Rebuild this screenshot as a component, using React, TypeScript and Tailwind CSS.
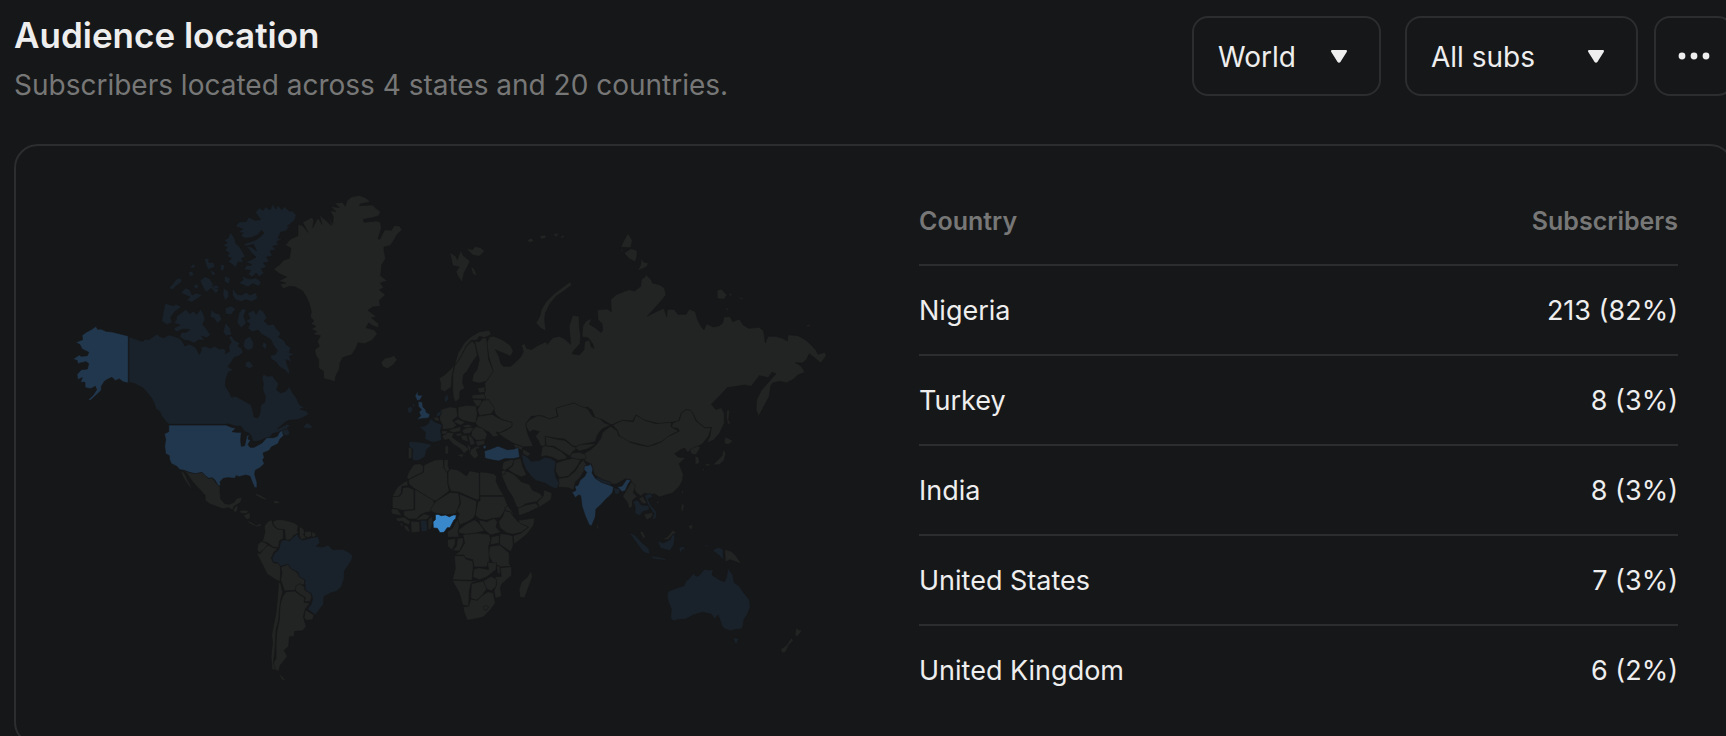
import type { ReactNode } from 'react';

type Tone = 'none' | 'low' | 'mid' | 'high';

type Region = {
  name: string;
  origin: string;
  shapes: Partial<Record<Tone, string[]>>;
};

type Row = {
  country: string;
  subscribers: number;
  share: number;
};

const rows: Row[] = [
  {country: 'Nigeria', subscribers: 213, share: 82},
  {country: 'Turkey', subscribers: 8, share: 3},
  {country: 'India', subscribers: 8, share: 3},
  {country: 'United States', subscribers: 7, share: 3},
  {country: 'United Kingdom', subscribers: 6, share: 2}
];

export default function App() {
  return (
    <div className="h-screen overflow-hidden bg-[#161718] font-[Inter,'Liberation_Sans',sans-serif] text-[#eeeeee]">
      <main className="-mr-2 pl-3.5 pt-4">
        <header className="flex items-start justify-between">
          <div>
            <h1 className="text-[35px] leading-[38px] font-semibold">Audience location</h1>
            <p className="mt-3 text-[28px] leading-[38px] text-[#777777]">
              Subscribers located across 4 states and 20 countries.
            </p>
          </div>
          <div className="flex">
            <Dropdown label="Region" className="mr-6 w-[189px]">
              <option>World</option>
              <option>United States</option>
            </Dropdown>
            <Dropdown label="Subscriber type" className="mr-4 w-[233px]">
              <option>All subs</option>
              <option>Paid subs</option>
            </Dropdown>
            <button
              type="button"
              aria-label="More options"
              className="flex size-20 items-center justify-center rounded-2xl border-2 border-[#2c2d2f]"
            >
              <svg width="32" height="8" viewBox="0 0 32 8" fill="currentColor">
                <circle cx="4" cy="4" r="3.4" />
                <circle cx="16" cy="4" r="3.4" />
                <circle cx="28" cy="4" r="3.4" />
              </svg>
            </button>
          </div>
        </header>

        <section className="mt-10 grid grid-cols-2 items-center gap-[90px] rounded-3xl border-2 border-[#2c2d2f] px-[54px] py-[29px]">
          <WorldMap />
          <SubscriberTable />
        </section>
      </main>
    </div>
  );
}

function Dropdown({label, className, children}: {label: string; className: string; children: ReactNode}) {
  return (
    <label className={`relative block ${className}`}>
      <select
        aria-label={label}
        className="h-20 w-full appearance-none rounded-2xl border-2 border-[#2c2d2f] bg-[#161718] pt-0.5 pr-14 pl-6 text-[28px]"
      >
        {children}
      </select>
      <svg
        className="pointer-events-none absolute top-[34px] right-[34px]"
        width="16"
        height="13"
        viewBox="0 0 16 13"
        fill="currentColor"
      >
        <path d="M1.2 0h13.6c1 0 1.5 1.1.9 1.9L9.4 12c-.7 1.1-2.1 1.1-2.8 0L.3 1.9C-.3 1.1.2 0 1.2 0z" />
      </svg>
    </label>
  );
}

function SubscriberTable() {
  return (
    <table className="w-full">
      <thead>
        <tr className="h-[90px] border-b-2 border-[#2c2d2f] text-[25px] text-[#777777]">
          <th scope="col" className="pt-1 text-left font-semibold">Country</th>
          <th scope="col" className="pt-1 text-right font-semibold">Subscribers</th>
        </tr>
      </thead>
      <tbody>
        {rows.map((row) => (
          <tr key={row.country} className="h-[90px] border-b-2 border-[#2c2d2f] text-[27px] last:border-b-0">
            <td className="pt-0.5">{row.country}</td>
            <td className="pt-0.5 text-right">{`${row.subscribers} (${row.share}%)`}</td>
          </tr>
        ))}
      </tbody>
    </table>
  );
}

function WorldMap() {
  return (
    <svg
      className="w-full stroke-[#161718]"
      viewBox="212 556 2277 1560"
      role="img"
      aria-label="Subscribers by country"
      strokeWidth="2"
      strokeLinejoin="round"
    >
      {regions.map((region) => (
        <g key={region.name} transform={`translate(${region.origin})`}>
          {(Object.keys(region.shapes) as Tone[]).map((tone) => (
            <g key={tone} className={toneFill[tone]}>
              {region.shapes[tone]?.map((points) => <polygon key={points} points={points} />)}
            </g>
          ))}
        </g>
      ))}
    </svg>
  );
}

const toneFill: Record<Tone, string> = {
  none: 'fill-[#222423]',
  low: 'fill-[#19222a]',
  mid: 'fill-[#20374d]',
  high: 'fill-[#3988cb]'
};

// Country outlines, grouped by region. Points are relative to the region's origin.
const regions: Region[] = [
  {
    name: 'Canada and Alaska',
    origin: '180 540',
    shapes: {
      low: [
        '209,471 222,476 238,482 250,485 258,478 268,480 280,472 294,462 300,470 312,474 330,466 345,470 360,476 370,486 376,498 390,494 404,500 412,508 420,524 426,512 424,502 440,500 452,506 466,500 480,508 494,506 500,514 498,522 510,515 508,500 516,488 508,474 516,468 526,482 542,490 536,500 546,506 552,518 540,528 524,534 516,548 506,560 512,566 524,570 508,578 500,596 498,618 510,638 516,652 530,650 548,660 566,670 576,676 580,690 584,712 596,714 602,700 604,676 616,668 618,650 610,630 612,612 608,596 612,584 626,590 640,588 648,600 658,612 652,630 664,640 680,634 690,620 700,640 712,656 720,674 735,685 722,688 742,694 748,704 730,714 715,720 690,722 680,726 668,736 654,748 666,742 682,734 694,736 684,744 690,764 680,768 668,754 656,758 640,762 632,772 620,775 600,784 582,786 575,768 568,760 556,756 545,740 530,740 505,732 500,734 328,734 320,726 306,708 302,696 290,688 285,672 276,654 264,640 250,624 238,618 226,612 209,608',
        '528,140 540,126 560,126 568,112 588,122 604,120 588,98 600,84 612,92 618,81 632,90 640,74 650,88 655,76 668,90 674,80 690,94 700,94 711,106 706,122 684,140 692,138 680,154 664,158 656,176 670,178 652,186 658,196 640,200 650,210 632,214 640,228 622,232 630,246 612,250 622,262 606,268 614,280 600,292 590,280 578,292 566,284 574,272 554,270 560,258 578,256 560,246 576,240 590,232 578,222 568,208 560,200 576,202 592,214 582,194 560,200 552,192 570,188 590,180 604,170 614,160 606,152 596,166 576,174 556,176 544,168 552,160 536,158 550,148',
        '513,158 526,176 530,192 540,200 550,216 558,232 546,236 554,248 536,248 530,264 518,254 506,246 516,236 502,230 510,220 496,212 504,204 490,196 504,190 494,180 506,176',
        '538,310 552,300 546,288 560,294 572,298 590,294 606,308 598,320 580,312 566,322 552,316',
        '519,326 534,344 548,346 560,338 572,346 590,338 595,356 578,366 560,360 545,366 528,360 519,346',
        '364,294 350,299 342,310 328,326 340,330 352,318 368,306',
        '364,340 378,325 392,330 398,346 412,340 430,346 412,358 398,368 382,362 392,352',
        '400,253 409,256 405,265 390,266',
        '387,277 400,275 403,286 392,292',
        '434,235 450,237 448,247 464,249 467,263 452,267 458,278 443,265',
        '484,253 497,257 492,275 483,271',
        '422,302 438,291 452,297 464,318 479,330 470,343 456,326 440,338 428,318',
        '458,318 474,316 480,324 468,328',
        '452,272 466,276 468,288 458,286',
        '497,287 513,297 509,314 495,305',
        '492,325 507,334 509,350 498,363 491,346',
        '408,312 420,318 412,328 402,322',
        '317,371 342,378 350,373 367,382 346,396 334,414 339,429 322,435 307,424 311,400',
        '352,410 368,398 380,389 392,402 402,394 412,404 424,388 433,404 437,420 430,434 442,448 454,466 442,474 426,470 437,482 418,481 404,491 390,484 376,482 361,471 366,458 380,458 392,450 372,448 350,457 343,446 362,436 343,430 351,420',
        '455,389 466,399 481,403 487,420 474,431 463,415 453,412',
        '497,385 516,379 529,388 516,405 499,403',
        '499,429 512,445 517,465 500,469 491,456',
        '539,400 548,387 561,389 553,410 561,430 546,445 533,430',
        '565,400 584,391 590,404 600,388 612,395 623,414 614,424 628,436 643,433 651,447 665,461 658,472 675,483 681,495 695,505 690,518 705,524 690,530 697,547 680,540 684,556 691,574 690,585 676,571 660,561 650,547 635,538 633,527 648,524 654,512 643,498 635,481 620,471 606,463 596,451 580,457 565,446 572,432 559,424 572,416',
        '555,480 572,469 583,490 581,506 566,513 551,500',
        '559,548 570,543 583,560 570,567 557,560',
        '611,487 623,492 619,511 609,500'
      ],
      mid: [
        '110,440 115,449 125,448 140,455 160,457 180,462 207,469 207,610 192,607 180,598 168,603 158,593 148,597 136,604 126,620 126,632 112,645 94,662 86,660 100,648 112,630 108,620 95,627 77,624 77,608 63,608 69,594 55,600 53,584 66,570 84,568 88,552 80,546 54,552 54,543 41,538 60,526 65,530 84,528 88,518 68,508 62,495 49,488 70,480 68,467 82,457 97,449'
      ]
    }
  },
  {
    name: 'Americas',
    origin: '180 1200',
    shapes: {
      none: [
        '366,211 388,217 408,221 428,217 448,237 458,233 470,250 482,258 482,276 484,298 496,312 510,314 524,308 532,296 549,293 544,308 534,314 524,320 520,332 508,324 490,327 470,320 450,312 437,302 438,288 426,274 412,260 400,246 388,230 384,222',
        '364,213 374,218 384,238 396,262 399,271 388,258 376,240 370,230',
        '522,330 530,318 536,320 534,334 526,339',
        '538,334 556,331 570,335 560,342 546,341',
        '551,348 572,338 572,356 564,360',
        '560,360 574,366 590,377 604,371 607,378 592,382 574,374',
        '588,281 604,287 622,297 620,302 602,294 588,287',
        '640,303 656,303 662,311 646,312',
        '638,360 626,365 615,380 617,398 611,420 606,424 626,430 640,442 658,444 660,424 672,416 672,390 654,388 644,380 640,372',
        '640,366 652,360 668,360 690,365 704,369 717,378 714,392 718,400 702,408 698,416 684,424 678,416 676,390 656,388 644,378',
        '720,380 732,387 737,398 732,404 740,416 726,420 720,408',
        '736,396 756,394 757,410 744,414 736,408',
        '758,395 771,404 765,413 757,411',
        '606,425 626,433 618,446 608,454 600,460 593,450 596,434',
        '591,460 602,462 612,450 626,436 642,444 656,446 644,458 636,476 644,490 658,490 664,502 664,520 662,546 646,538 624,524 612,500 600,476',
        '664,502 686,494 694,506 714,518 720,530 736,540 736,556 718,554 708,572 676,574 668,552 664,540 668,520',
        '708,572 710,558 722,552 734,560 738,572 750,578 758,590 752,606 734,606 738,594 722,584',
        '738,630 764,646 760,660 742,662 734,654',
        '680,576 706,574 722,586 736,594 734,608 752,610 738,628 732,650 736,666 741,680 730,693 706,695 704,711 690,711 688,740 674,752 684,770 670,788 662,798 658,815 646,811 640,794 650,776 650,740 652,700 660,660 662,616 670,590',
        '658,546 664,552 670,578 664,600 660,630 658,660 650,690 648,730 646,760 642,790 650,812 638,808 635,770 640,730 637,706 643,676 650,640 654,600',
        '656,818 668,830 681,843 668,841'
      ],
      low: [
        '666,422 680,420 690,424 702,412 714,402 720,416 730,421 754,415 768,412 776,410 782,430 770,440 790,442 806,436 820,450 850,449 868,457 880,468 877,482 866,498 855,514 855,536 847,560 832,575 812,581 794,591 793,613 780,630 768,646 744,628 756,612 760,598 756,582 738,572 736,540 720,532 716,518 696,508 686,494 664,500 656,490 640,486 638,474 646,460 658,450',
        '732,80 744,69 756,77 761,84 746,87 734,85',
        '664,98 672,90 688,88 692,104 680,109 672,104'
      ],
      mid: [
        '328,76 500,76 514,82 530,86 518,96 532,98 546,98 544,120 546,140 556,138 562,110 570,104 566,118 574,122 566,134 572,143 584,143 608,130 622,114 642,114 654,110 660,98 668,92 673,108 662,118 656,132 636,142 630,152 611,160 615,174 610,180 615,192 602,204 588,212 586,224 593,248 593,264 586,264 578,246 572,230 560,226 540,231 530,228 528,236 505,234 492,236 482,246 484,259 476,257 466,240 458,234 448,236 438,228 428,218 408,222 390,218 374,212 362,210 352,200 336,192 330,178 330,168 319,162 316,140 319,120 315,102 328,96'
      ]
    }
  },
  {
    name: 'North Atlantic',
    origin: '780 540',
    shapes: {
      none: [
        '262,64 276,52 300,47 318,54 334,66 302,73 300,78 340,76 350,86 364,96 358,108 340,114 312,119 314,128 350,124 364,128 366,146 356,178 362,178 376,150 396,152 404,138 420,138 428,150 412,166 404,182 392,198 374,202 374,214 379,236 367,256 364,288 384,304 362,310 374,324 360,330 378,346 360,362 363,380 340,382 326,392 342,404 352,412 336,414 358,432 358,444 340,438 328,430 320,444 344,450 354,462 338,482 316,492 296,489 290,506 276,526 262,530 250,534 242,550 240,568 229,590 227,606 208,600 193,597 192,574 178,566 178,540 169,526 166,510 180,500 174,486 183,468 160,464 172,456 156,448 170,440 154,432 164,424 153,412 156,396 150,372 140,350 130,334 108,322 90,320 72,327 62,314 80,310 58,304 82,292 60,282 43,268 60,256 72,242 90,236 95,206 78,196 94,178 116,168 116,134 130,138 146,158 130,128 158,113 164,122 160,144 176,114 188,134 180,106 200,122 216,138 204,104 220,134 222,112 212,92 230,96 214,80 240,84 226,70 250,68 258,80',
        '365,548 378,535 392,533 404,527 413,540 402,555 384,567 369,560',
        '571,218 590,230 594,240 604,212 612,228 632,244 624,262 614,280 608,308 596,290 590,276 600,262 580,258',
        '620,206 640,210 646,200 664,204 676,214 660,230 640,226',
        '634,258 646,270 654,290 640,282'
      ]
    }
  },
  {
    name: 'Northern Asia',
    origin: '1680 660',
    shapes: {
      none: [
        '-210,352 -196,350 -170,361 -148,376 -138,394 -146,410 -160,404 -184,394 -192,390 -180,412 -176,430 -168,440 -146,440 -128,424 -116,412 -108,396 -114,376 -104,372 -98,386 -84,390 -66,378 -40,366 -36,374 -20,354 0,350 16,358 34,374 32,350 29,320 40,287 59,290 60,320 64,350 62,372 44,392 38,402 60,406 74,390 76,366 90,360 96,382 104,386 100,372 86,354 68,352 70,320 80,304 98,296 90,314 110,326 124,338 130,334 128,312 116,300 114,270 144,268 156,276 154,240 170,225 196,215 210,210 226,214 244,200 246,180 262,167 276,180 280,190 300,195 315,204 320,226 300,250 264,290 290,276 314,266 322,292 324,269 344,269 356,284 380,284 390,268 408,276 415,300 426,322 434,330 442,312 462,322 480,318 490,310 494,291 512,291 520,306 540,298 552,316 568,326 600,323 613,334 618,370 626,350 650,350 670,356 684,364 686,345 716,348 738,360 756,376 770,392 776,404 796,398 801,408 784,430 770,418 750,402 742,418 730,430 708,429 726,440 737,458 716,466 700,480 682,489 660,485 640,490 634,500 630,530 614,560 598,590 590,570 592,540 606,512 620,496 636,478 650,462 638,458 626,474 600,468 576,500 556,496 530,500 504,504 480,530 456,554 470,570 486,564 495,580 495,610 480,642 462,662 442,670 452,650 456,624 436,624 412,604 402,584 394,572 380,570 366,580 358,604 336,608 300,612 256,602 230,586 220,604 190,602 156,616 130,600 108,596 98,572 84,562 70,568 60,560 44,550 20,558 -10,566 -6,590 -30,598 -52,588 -84,590 -100,610 -98,630 -92,650 -84,666 -78,680 -108,682 -140,670 -166,654 -184,640 -164,634 -144,622 -144,608 -172,600 -192,584 -198,566 -212,542 -230,540 -222,510 -224,490 -216,480 -200,452 -212,410 -218,370',
        '33,186 37,196 14,214 -10,230 -28,252 -42,280 -44,300 -40,334 -56,326 -70,310 -58,288 -54,270 -40,246 -16,222 6,206',
        '206,41 219,62 214,84 184,82 194,62',
        '194,100 214,87 233,92 233,108 228,127 208,116',
        '246,116 254,128 267,130 262,142 234,153 244,136',
        '180,88 192,90 190,97',
        '473,212 486,209 503,226 494,239 474,237',
        '507,218 517,222 515,234',
        '528,228 554,236 548,240',
        '494,262 508,268 504,274',
        '736,320 748,314 756,322',
        '-98,62 -84,55 -76,64 -88,69',
        '-60,50 -44,45 -38,54 -54,59',
        '-20,44 -2,39 -8,53',
        '0,55 14,44 14,55',
        '503,570 511,572 508,600 515,613 505,613 501,590',
        '154,620 174,634 178,648 206,658 212,668 240,676 264,680 290,674 310,664 314,654 336,646 360,634 356,626 336,624 340,610 360,602 366,580 380,570 394,572 402,584 410,604 436,624 456,624 448,648 436,664 430,672 412,682 398,692 384,698 376,685 364,690 346,702 356,712 379,714 359,732 372,764 369,784 360,800 340,820 316,827 300,832 286,822 270,826 256,820 244,830 230,818 220,800 214,780 198,778 170,794 150,792 120,776 104,764 100,748 96,734 76,724 72,702 94,690 110,676 124,656 130,638 142,628',
        '160,616 190,602 222,606 230,586 256,602 290,612 336,608 336,622 358,634 330,648 306,666 266,680 210,666 180,648 174,632'
      ]
    }
  },
  {
    name: 'Europe and Central Asia',
    origin: '1140 930',
    shapes: {
      none: [
        '87,411 98,415 98,446 87,448',
        '161,323 176,321 181,335 168,333',
        '182,300 204,294 212,291 232,295 235,320 220,332 232,346 222,356 190,360 188,344 181,330',
        '236,292 262,287 290,289 294,310 290,340 270,337 250,332 236,322',
        '179,206 196,196 212,180 226,164 236,130 256,98 274,82 300,66 330,62 336,74 316,84 300,80 292,92 276,92 262,108 240,150 224,170 218,200 216,232 196,246 183,240 184,220',
        '220,240 220,196 226,168 240,150 262,108 278,94 288,104 294,138 284,150 274,166 264,184 252,196 250,220 256,236 242,244 241,266 228,278 222,262',
        '286,94 300,96 310,84 322,86 324,110 328,150 342,184 322,214 300,221 278,215 282,194 293,180 300,150 292,120',
        '294,236 316,231 317,248 300,250',
        '278,256 314,252 320,268 296,268 278,267',
        '279,270 306,270 310,287 292,291',
        '310,272 328,270 346,296 336,312 300,318 294,300',
        '296,320 338,314 352,322 368,330 398,338 398,350 376,362 362,369 350,367 358,379 342,382 330,368 314,360 296,350 288,340',
        '278,362 290,350 310,356 324,374 318,390 290,392 275,377',
        '288,394 317,391 316,404 294,410',
        '221,336 236,328 258,338 244,347',
        '206,362 224,356 245,350 243,365 222,369',
        '248,362 266,352 284,354 272,371 254,373',
        '246,348 268,344 282,350 260,355',
        '228,372 246,370 248,378 234,380',
        '244,378 262,376 268,398 248,390',
        '266,374 280,384 288,404 272,407',
        '268,424 290,410 306,411 290,420 298,438 286,448 275,437',
        '264,402 274,412 273,427 265,418',
        '188,380 204,368 224,370 218,382 234,394 258,408 268,419 254,432 244,418 222,404 208,388 196,392',
        '230,435 253,432 250,444',
        '197,408 207,408 207,433 197,433',
        '186,363 206,363 200,374 188,374',
        '402,402 432,412 428,422 408,416',
        '430,417 454,431 446,441 430,432',
        '440,340 454,328 474,318 490,320 510,328 536,320 530,296 556,288 584,280 604,290 624,296 640,320 662,328 676,340 694,346 668,358 654,376 648,396 610,404 594,412 580,408 556,388 530,386 498,380 498,410 484,409 477,392 468,380 480,366 462,361 450,368 441,352',
        '488,412 498,408 520,412 544,424 562,440 560,448 536,452 522,444 500,438 484,442',
        '498,380 530,388 556,392 580,410 596,414 580,426 572,440 546,424 524,410 500,408',
        '594,408 610,404 652,402 624,418 600,424 588,416',
        '578,430 600,428 618,434 620,448 590,450 572,442',
        '530,460 560,450 580,446 604,450 596,466 586,480 566,500 540,504 528,484',
        '538,506 566,502 588,484 600,464 612,450 622,466 614,484 602,504 588,518 583,542 566,534 536,532'
      ],
      low: [
        '84,296 96,289 101,300 95,311 85,309',
        '118,350 134,350 146,342 154,326 166,336 189,346 184,360 187,392 170,397 158,398 136,388 138,368',
        '89,395 120,397 150,403 158,406 142,420 137,441 120,452 104,454 98,446 100,418 89,411',
        '171,312 185,301 185,316 171,323',
        '195,264 206,253 207,270 198,281',
        '426,434 438,438 448,446 456,455 480,452 496,442 514,446 530,456 526,484 530,504 540,520 532,538 514,531 496,520 470,513 456,500 440,480 432,462'
      ],
      mid: [
        '107,258 116,243 116,256 130,257 122,271 113,273',
        '116,275 129,277 131,292 139,300 141,308 152,314 148,325 126,327 112,330 124,318 119,308 126,300 117,290',
        '99,284 105,284 104,292',
        '315,424 334,418 356,409 384,420 404,418 417,413 421,443 402,447 376,447 358,454 340,451 317,446',
        '311,409 321,407 319,417 312,417'
      ]
    }
  },
  {
    name: 'Africa and Middle East',
    origin: '1140 1320',
    shapes: {
      none: [
        '82,112 90,94 104,74 122,72 133,80 131,98 108,108 88,120',
        '39,170 54,142 68,132 84,122 86,138 68,140 66,160 56,172',
        '88,120 132,98 134,76 166,61 192,59 194,84 204,98 206,134 210,154 170,184 160,182 104,146 88,132',
        '194,61 207,59 206,78 211,90 202,98 194,84',
        '206,98 214,87 236,91 262,109 270,93 300,99 300,178 292,181 240,158 214,154 206,132',
        '301,97 320,98 346,103 352,112 350,124 360,146 374,168 301,168',
        '39,172 60,170 68,160 70,144 86,142 104,150 104,210 68,212 54,208 39,206',
        '106,148 162,182 168,200 156,216 140,218 122,226 112,238 90,238 74,228 72,214 106,210',
        '168,186 212,158 238,160 242,190 230,222 200,226 176,222 166,220 152,212',
        '240,162 292,184 290,220 282,236 262,248 240,256 234,236 240,222 232,214 244,192',
        '302,170 374,170 386,200 374,216 362,234 340,236 320,242 300,238 288,226 296,184 302,184',
        '298,240 322,246 344,236 354,246 350,262 364,278 334,286 316,272 302,252',
        '376,212 392,216 404,232 414,244 448,262 426,278 400,284 382,280 362,264 358,246 370,230',
        '376,204 386,198 408,230 392,216 380,214',
        '416,242 466,235 463,256 444,282 420,302 404,314 401,288 426,280 448,262 424,252',
        '362,282 384,284 400,288 402,318 394,336 360,314',
        '336,292 360,286 360,310 332,316',
        '332,320 362,316 390,340 390,372 396,380 364,382 340,370 326,344',
        '250,284 290,280 330,284 334,300 328,320 330,364 322,382 284,382 280,360 256,354 254,346 226,346 240,336 256,310',
        '238,270 262,252 286,240 302,254 316,274 290,280 260,284 238,280',
        '205,293 204,276 220,264 228,248 236,238 240,256 236,278 240,292',
        '204,300 228,296 228,312 218,332 205,320',
        '220,333 232,318 234,296 252,294 252,310 240,334',
        '225,348 254,348 260,358 280,364 282,380 278,422 219,420 228,388',
        '284,388 300,384 328,390 324,368 352,370 350,390 322,412 300,420 280,412',
        '352,378 362,380 362,404 354,400',
        '362,384 397,381 397,407 368,432 363,444 367,470 348,476 344,454 352,432 346,412 366,410',
        '312,424 336,410 352,420 350,440 336,454 318,446',
        '276,432 312,424 322,448 308,468 292,482 274,476',
        '219,422 278,424 308,422 276,430 270,452 268,500 250,496 240,460',
        '251,502 268,500 274,478 294,482 308,468 326,456 342,460 348,490 332,512 312,532 290,537 264,542 256,522',
        '312,502 320,497 328,502 322,511 315,511',
        '456,392 459,412 448,442 436,474 422,473 419,450 426,428 444,412',
        '37,207 54,208 68,228 40,224 35,216',
        '48,236 74,232 92,244 90,256 76,250 68,244 56,247',
        '58,248 72,254 68,262',
        '72,256 84,258 95,280 78,270',
        '94,244 121,246 122,277 96,279',
        '108,242 134,222 154,228 142,240',
        '146,240 158,230 161,248 154,270 146,268',
        '366,106 382,94 404,104 426,126 450,134 460,152 480,160 490,170 472,186 440,192 420,206 412,202 400,172 384,148',
        '415,206 440,196 470,190 479,202 450,217 419,228',
        '474,188 492,168 494,150 518,160 515,180 480,203',
        '372,66 396,59 406,61 398,78 376,93 368,86',
        '404,60 424,55 430,80 442,106 426,112 404,102 386,90 400,78',
        '367,92 380,92 376,104 366,106'
      ],
      low: ['123,242 142,242 145,273 126,277'],
      high: [
        '168,225 176,224 186,228 198,226 210,231 222,226 231,226 229,237 224,241 218,252 212,264 204,264 194,278 182,279 174,266 162,265 161,246 168,240'
      ]
    }
  },
  {
    name: 'South Asia and Oceania',
    origin: '1620 1200',
    shapes: {
      none: [
        '262,270 276,246 288,258 282,280 294,290 280,302 279,320 270,328 264,308 250,290',
        '298,296 310,290 324,312 310,312',
        '313,344 342,338 337,353 322,361',
        '301,394 312,397 319,416 310,415',
        '368,420 386,410 400,392 411,398 396,410 386,420',
        '427,310 435,318 431,336 425,330',
        '446,378 461,374 457,391 450,386',
        '556,449 576,455 591,470 606,493 586,485 572,480 558,487',
        '428,268 433,278 427,286',
        '350,304 361,306 354,313',
        '171,372 179,382 174,392',
        '552,149 559,160 555,182 540,195 520,196 536,180 548,168',
        '498,192 513,193 510,199 499,199',
        '489,201 495,210 491,218',
        '557,111 567,116 581,124 566,135 555,131',
        '451,150 474,139 484,143 470,165 456,163',
        '467,169 478,173 481,190 468,195',
        '771,684 780,691 789,691 778,706 772,713 767,702',
        '756,714 762,722 748,737 739,757 728,760 724,749 740,738'
      ],
      low: [
        '170,230 190,240 214,247 217,257 190,251 172,241',
        '222,264 241,267 241,281 228,285',
        '281,306 294,300 306,316 330,318 329,331 310,336 302,348 286,341 288,322',
        '315,288 332,280 341,291 326,298 334,316 351,336 351,355 338,361 344,342 324,312 320,298',
        '269,398 288,407 306,427 329,448 331,464 312,457 296,436',
        '353,423 372,430 392,420 400,403 407,410 403,436 392,453 364,446',
        '334,469 356,471 380,477 377,482 340,477',
        '418,444 434,440 437,457 430,448 424,462',
        '498,434 509,439 500,443',
        '519,452 536,443 552,449 552,482 540,468',
        '388,574 410,566 434,558 440,544 450,536 462,521 470,530 478,528 486,520 494,509 508,511 522,510 518,526 540,540 556,546 562,530 566,504 574,518 580,524 584,548 600,560 614,580 630,600 633,620 626,640 614,660 609,687 586,690 574,693 556,688 548,680 542,660 536,646 526,658 516,644 490,638 462,646 440,658 416,660 402,664 394,656 396,628 386,604 383,584',
        '581,714 599,716 592,732 586,729'
      ],
      mid: [
        '135,199 148,197 154,193 161,208 158,220 168,236 186,248 210,256 223,262 220,278 212,288 200,298 186,314 170,328 168,352 157,378 150,377 138,350 128,320 124,288 118,286 108,294 98,278 110,272 106,260 116,257 122,242 136,230 142,218 134,210',
        '234,261 248,259 262,239 275,241 266,254 258,273 248,276'
      ]
    }
  }
];
